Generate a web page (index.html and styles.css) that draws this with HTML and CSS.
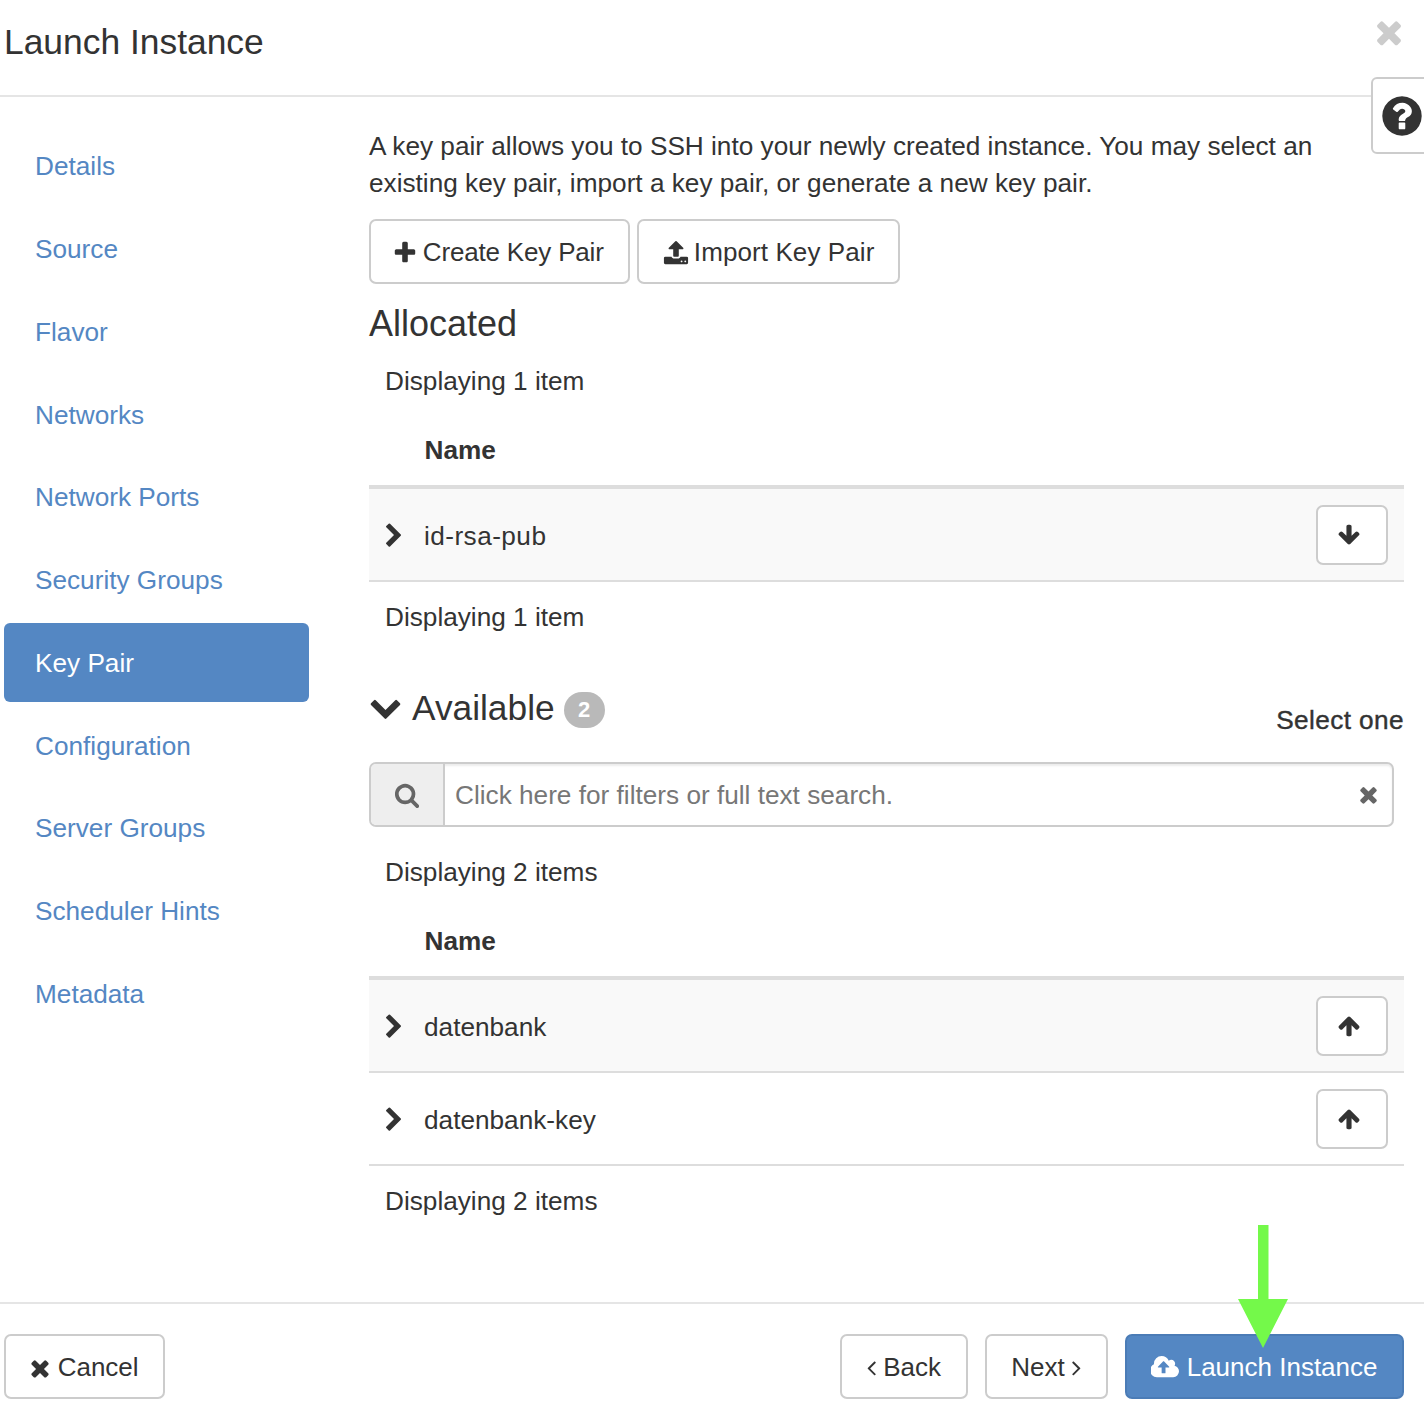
FILE: index.html
```html
<!DOCTYPE html>
<html lang="en">
<head>
  <meta charset="UTF-8">
  <title>Launch Instance</title>
  <link rel="stylesheet" href="styles.css">
</head>
<body>
  <svg class="icon-defs" xmlns="http://www.w3.org/2000/svg">
    <symbol id="i-times" viewBox="0 0 1792 1792"><path d="M1490 1322q0 40-28 68l-136 136q-28 28-68 28t-68-28l-294-294-294 294q-28 28-68 28t-68-28l-136-136q-28-28-28-68t28-68l294-294-294-294q-28-28-28-68t28-68l136-136q28-28 68-28t68 28l294 294 294-294q28-28 68-28t68 28l136 136q28 28 28 68t-28 68l-294 294 294 294q28 28 28 68z"/></symbol>
    <symbol id="i-plus" viewBox="0 0 1792 1792"><path d="M1600 736v192q0 40-28 68t-68 28h-416v416q0 40-28 68t-68 28h-192q-40 0-68-28t-28-68v-416h-416q-40 0-68-28t-28-68v-192q0-40 28-68t68-28h416v-416q0-40 28-68t68-28h192q40 0 68 28t28 68v416h416q40 0 68 28t28 68z"/></symbol>
    <symbol id="i-upload" viewBox="0 0 1792 1792"><path d="M1344 1472q0-26-19-45t-45-19-45 19-19 45 19 45 45 19 45-19 19-45zm256 0q0-26-19-45t-45-19-45 19-19 45 19 45 45 19 45-19 19-45zm128-224v320q0 40-28 68t-68 28h-1472q-40 0-68-28t-28-68v-320q0-40 28-68t68-28h427q21 56 70.5 92t110.5 36h256q61 0 110.5-36t70.5-92h427q40 0 68 28t28 68zm-325-648q-17 40-59 40h-256v448q0 26-19 45t-45 19h-256q-26 0-45-19t-19-45v-448h-256q-42 0-59-40-17-39 14-69l448-448q18-19 45-19t45 19l448 448q31 30 14 69z"/></symbol>
    <symbol id="i-right" viewBox="0 0 1792 1792"><path d="M1363 877l-742 742q-19 19-45 19t-45-19l-166-166q-19-19-19-45t19-45l531-531-531-531q-19-19-19-45t19-45l166-166q19-19 45-19t45 19l742 742q19 19 19 45t-19 45z"/></symbol>
    <symbol id="i-down" viewBox="0 0 1792 1792"><path d="M1683 808l-742 741q-19 19-45 19t-45-19l-742-741q-19-19-19-45.5t19-45.5l166-165q19-19 45-19t45 19l531 531 531-531q19-19 45-19t45 19l166 165q19 19 19 45.5t-19 45.5z"/></symbol>
    <symbol id="i-arrow-down" viewBox="0 0 1792 1792"><path d="M1675 832q0 53-37 90l-651 652q-39 37-91 37-53 0-90-37l-651-652q-38-36-38-90 0-53 38-91l74-75q39-37 91-37 53 0 90 37l294 294v-704q0-52 38-90t90-38h128q52 0 90 38t38 90v704l294-294q37-37 90-37 52 0 91 37l75 75q37 39 37 91z"/></symbol>
    <symbol id="i-arrow-up" viewBox="0 0 1792 1792"><path d="M1675 971q0 51-37 90l-75 75q-38 38-91 38-54 0-90-38l-294-293v704q0 52-37.5 84.5t-90.5 32.5h-128q-53 0-90.5-32.5t-37.5-84.5v-704l-294 293q-36 38-90 38t-90-38l-75-75q-38-38-38-90 0-53 38-91l651-651q35-37 90-37 54 0 91 37l651 651q37 39 37 91z"/></symbol>
    <symbol id="i-search" viewBox="0 0 1792 1792"><path d="M1216 832q0-185-131.5-316.5t-316.5-131.5-316.5 131.5-131.5 316.5 131.5 316.5 316.5 131.5 316.5-131.5 131.5-316.5zm512 832q0 52-38 90t-90 38q-54 0-90-38l-343-342q-179 124-399 124-143 0-273.5-55.5t-225-150-150-225-55.5-273.5 55.5-273.5 150-225 225-150 273.5-55.5 273.5 55.5 225 150 150 225 55.5 273.5q0 220-124 399l343 343q37 37 37 90z"/></symbol>
    <symbol id="i-question" viewBox="0 0 1792 1792"><path d="M1024 1376v-192q0-14-9-23t-23-9h-192q-14 0-23 9t-9 23v192q0 14 9 23t23 9h192q14 0 23-9t9-23zm256-672q0-88-55.5-163t-138.5-116-170-41q-243 0-371 213-15 24 8 42l132 100q7 6 19 6 16 0 25-12 53-68 86-92 34-24 86-24 48 0 85.5 26t37.5 59q0 38-20 61t-68 45q-63 28-115.5 86.5t-52.5 125.5v36q0 14 9 23t23 9h192q14 0 23-9t9-23q0-19 21.5-49.5t54.5-49.5q32-18 49-28.5t46-35 44.5-48 28-60.5 12.5-81zm384 192q0 209-103 385.5t-279.5 279.5-385.5 103-385.5-103-279.5-279.5-103-385.5 103-385.5 279.5-279.5 385.5-103 385.5 103 279.5 279.5 103 385.5z"/></symbol>
    <symbol id="i-angle-left" viewBox="0 0 1792 1792"><path d="M1203 544q0 13-10 23l-393 393 393 393q10 10 10 23t-10 23l-50 50q-10 10-23 10t-23-10l-466-466q-10-10-10-23t10-23l466-466q10-10 23-10t23 10l50 50q10 10 10 23z"/></symbol>
    <symbol id="i-angle-right" viewBox="0 0 1792 1792"><path d="M1171 960q0 13-10 23l-466 466q-10 10-23 10t-23-10l-50-50q-10-10-10-23t10-23l393-393-393-393q-10-10-10-23t10-23l50-50q10-10 23-10t23 10l466 466q10 10 10 23z"/></symbol>
    <symbol id="i-cloud" viewBox="0 0 1920 1792"><path d="M1216 864q0-14-9-23l-352-352q-9-9-23-9t-23 9l-351 351q-10 12-10 24 0 14 9 23t23 9h224v352q0 13 9.5 22.5t22.5 9.5h192q13 0 22.5-9.5t9.5-22.5v-352h224q13 0 22.5-9.5t9.5-22.5zm640 288q0 159-112.5 271.5t-271.5 112.5h-1088q-185 0-316.5-131.5t-131.5-316.5q0-130 70-240t188-165q-2-30-2-43 0-212 150-362t362-150q156 0 285.5 87t188.5 231q71-62 166-62 106 0 181 75t75 181q0 76-41 138 130 31 213.5 135.5t83.5 238.5z"/></symbol>
  </svg>

  <div class="modal">
    <header class="modal-header">
      <h1>Launch Instance</h1>
      <svg class="close-icon"><use href="#i-times"/></svg>
    </header>

    <a class="help-tab"><svg class="help-icon"><use href="#i-question"/></svg></a>

    <div class="modal-body">
      <nav class="steps">
        <a>Details</a>
        <a>Source</a>
        <a>Flavor</a>
        <a>Networks</a>
        <a>Network Ports</a>
        <a>Security Groups</a>
        <a class="active">Key Pair</a>
        <a>Configuration</a>
        <a>Server Groups</a>
        <a>Scheduler Hints</a>
        <a>Metadata</a>
      </nav>

      <section class="content">
        <p class="intro">A key pair allows you to SSH into your newly created instance. You may select an existing key pair, import a key pair, or generate a new key pair.</p>

        <div class="key-actions">
          <button class="btn btn-create"><svg class="ico"><use href="#i-plus"/></svg> Create Key Pair</button>
          <button class="btn btn-import"><svg class="ico"><use href="#i-upload"/></svg> Import Key Pair</button>
        </div>

        <h2 class="allocated-title">Allocated</h2>
        <div class="count count-first">Displaying 1 item</div>
        <div class="col-name">Name</div>
        <div class="row row-striped">
          <svg class="row-chevron"><use href="#i-right"/></svg>
          <span class="row-name row-name-hyphen">id-rsa-pub</span>
          <button class="btn btn-move"><svg class="ico-move"><use href="#i-arrow-down"/></svg></button>
        </div>
        <div class="count count-last">Displaying 1 item</div>

        <div class="available-head">
          <div class="available-title">
            <svg class="title-chevron"><use href="#i-down"/></svg>
            <h2>Available</h2>
            <span class="badge">2</span>
          </div>
          <div class="select-one">Select one</div>
        </div>

        <div class="search">
          <span class="search-addon"><svg class="search-icon"><use href="#i-search"/></svg></span>
          <span class="search-input">Click here for filters or full text search.</span>
          <svg class="search-clear"><use href="#i-times"/></svg>
        </div>

        <div class="count count-items">Displaying 2 items</div>
        <div class="col-name">Name</div>
        <div class="row row-striped">
          <svg class="row-chevron"><use href="#i-right"/></svg>
          <span class="row-name">datenbank</span>
          <button class="btn btn-move"><svg class="ico-move"><use href="#i-arrow-up"/></svg></button>
        </div>
        <div class="row">
          <svg class="row-chevron"><use href="#i-right"/></svg>
          <span class="row-name">datenbank-key</span>
          <button class="btn btn-move"><svg class="ico-move"><use href="#i-arrow-up"/></svg></button>
        </div>
        <div class="count count-last">Displaying 2 items</div>
      </section>
    </div>

    <footer class="modal-footer">
      <button class="btn btn-cancel"><svg class="ico ico-cancel"><use href="#i-times"/></svg> Cancel</button>
      <div class="footer-right">
        <button class="btn btn-back"><svg class="ico-angle ico-angle-left"><use href="#i-angle-left"/></svg>Back</button>
        <button class="btn btn-next">Next<svg class="ico-angle ico-angle-right"><use href="#i-angle-right"/></svg></button>
        <button class="btn btn-launch"><svg class="ico ico-cloud"><use href="#i-cloud"/></svg> Launch Instance</button>
      </div>
    </footer>

    <!-- green annotation arrow on top of the screenshot -->
    <svg class="annotation" viewBox="0 0 50 123"><path d="M20 0h10.5v74H50L25 123 0 74h20z"/></svg>
  </div>
</body>
</html>
```

FILE: styles.css
```css
* {
  box-sizing: border-box;
}

body {
  margin: 0;
  background: #fff;
  color: #333;
  font-family: "Liberation Sans", Arial, sans-serif;
  font-size: 26.2px;
  line-height: 37px;
}

.icon-defs {
  display: none;
}

svg {
  fill: currentColor;
}

.modal {
  position: relative;
  width: 1424px;
  height: 1412px;
  overflow: hidden;
}

/* header */
.modal-header {
  height: 97px;
  border-bottom: 2px solid #e5e5e5;
  padding: 24px 0 0 4px;
}

.modal-header h1 {
  margin: 0;
  font-size: 35.4px;
  font-weight: 400;
  line-height: 37px;
}

.close-icon {
  position: absolute;
  top: 14px;
  right: 17px;
  width: 36px;
  height: 36px;
  color: #ccc;
}

.help-tab {
  position: absolute;
  top: 77px;
  left: 1371px;
  width: 70px;
  height: 77px;
  background: #fff;
  border: 2px solid #ccc;
  border-radius: 6px;
  padding: 14px 0 0 6px;
}

.help-icon {
  display: block;
  width: 46px;
  height: 46px;
}

/* body */
.modal-body {
  display: flex;
  height: 1205px;
}

.steps {
  width: 369px;
  flex-shrink: 0;
  padding: 29px 0 0 4px;
  display: flex;
  flex-direction: column;
  gap: 3.78px;
}

.steps a {
  display: flex;
  align-items: center;
  width: 305px;
  height: 79px;
  padding: 2.45px 0 0 31px;
  border-radius: 6px;
  color: #5487c3;
}

.steps a.active {
  background: #5487c3;
  color: #fff;
}

.content {
  width: 1035px;
  padding-top: 31px;
}

.intro {
  margin: 0;
  width: 960px;
}

.btn {
  display: inline-flex;
  align-items: center;
  justify-content: center;
  height: 65px;
  padding: 2px 0 0;
  border: 2px solid #ccc;
  border-radius: 7px;
  background: #fff;
  color: #333;
  font-family: inherit;
  font-size: 26px;
  white-space: pre;
}

.ico {
  width: 26px;
  height: 26px;
  margin-right: -2px;
}

.key-actions {
  display: flex;
  gap: 7px;
  margin-top: 17px;
}

.btn-create {
  width: 261px;
  letter-spacing: -0.18px;
  padding-right: 3px;
}

.btn-create .ico {
  margin-right: -2.5px;
}

.btn-import {
  width: 263px;
  letter-spacing: 0.1px;
}

.allocated-title,
.available-title h2 {
  margin: 0;
  font-weight: 400;
  line-height: 40px;
}

.allocated-title {
  margin-top: 20px;
  font-size: 36px;
}

.available-title h2 {
  font-size: 35.3px;
}

.count {
  padding-left: 16px;
}

.count-first {
  margin-top: 19px;
}

.count-last {
  margin-top: 17px;
}

.count-items {
  margin-top: 27px;
}

.col-name {
  height: 71px;
  border-bottom: 4px solid #ddd;
  padding: 14px 0 0 55.5px;
  font-weight: 700;
  margin-top: 18px;
}

.row {
  display: flex;
  align-items: center;
  height: 93px;
  border-bottom: 2px solid #ddd;
  padding: 1px 16px 0;
}

.row-striped {
  background: #f9f9f9;
}

.row-chevron {
  width: 26px;
  height: 26px;
  margin: 2px 0 0 -4.5px;
}

.row-name {
  margin-left: 17.5px;
  padding-top: 2px;
  flex: 1;
}

.row-name-hyphen {
  letter-spacing: 0.45px;
}

.btn-move {
  width: 72px;
  height: 60px;
  padding: 0 7px 0 0;
}

.ico-move {
  width: 24px;
  height: 24px;
}

/* available */
.available-head {
  display: flex;
  justify-content: space-between;
  margin-top: 52px;
  height: 52px;
}

.available-title {
  display: flex;
  align-items: center;
  height: 40px;
}

.title-chevron {
  width: 33px;
  height: 33px;
  margin-right: 10px;
  margin-top: -4px;
}

.badge {
  display: flex;
  align-items: center;
  justify-content: center;
  width: 41px;
  height: 36px;
  margin: 3px 0 0 9px;
  border-radius: 18px;
  background: #b9b9b9;
  color: #fff;
  font-size: 22px;
  font-weight: 700;
}

.select-one {
  padding-top: 14px;
  letter-spacing: 0.4px;
  -webkit-text-stroke: 0.4px #333;
}

.search {
  display: flex;
  align-items: center;
  width: 1025px;
  height: 65px;
  margin-top: 22px;
  border: 2px solid #ccc;
  border-radius: 7px;
  box-shadow: inset 0 2px 2px rgba(0, 0, 0, .075);
  padding-right: 11px;
  overflow: hidden;
}

.search-addon {
  display: flex;
  align-items: center;
  justify-content: center;
  width: 74px;
  height: 100%;
  background: #eee;
  border-right: 2px solid #ccc;
}

.search-icon {
  width: 26px;
  height: 26px;
  color: #666;
}

.search-input {
  flex: 1;
  padding: 2px 0 0 10px;
  color: #777;
}

.search-clear {
  width: 25px;
  height: 25px;
  color: #666;
}

/* footer */
.modal-footer {
  display: flex;
  justify-content: space-between;
  height: 110px;
  border-top: 2px solid #e5e5e5;
  padding: 30px 20px 0 4px;
}

.footer-right {
  display: flex;
}

.btn-cancel {
  width: 161px;
}

.ico-cancel {
  width: 26px;
  height: 26px;
  margin: 0 -3px 0 -3px;
}

.btn-back {
  width: 128px;
  margin-right: 17px;
  padding-right: 8px;
}

.btn-next {
  width: 123px;
  margin-right: 17px;
  padding-left: 7px;
}

.ico-angle {
  width: 25px;
  height: 25px;
}

.ico-angle-left {
  margin-right: -0.7px;
}

.ico-angle-right {
  margin-left: -1px;
}

.btn-launch {
  width: 279px;
  background: #5487c3;
  border-color: #4b7cb6;
  color: #fff;
}

.ico-cloud {
  width: 29px;
  height: 27px;
  margin-right: -1px;
}

.annotation {
  position: absolute;
  left: 1238px;
  top: 1225px;
  width: 50px;
  height: 123px;
  fill: #74f94a;
}
```
